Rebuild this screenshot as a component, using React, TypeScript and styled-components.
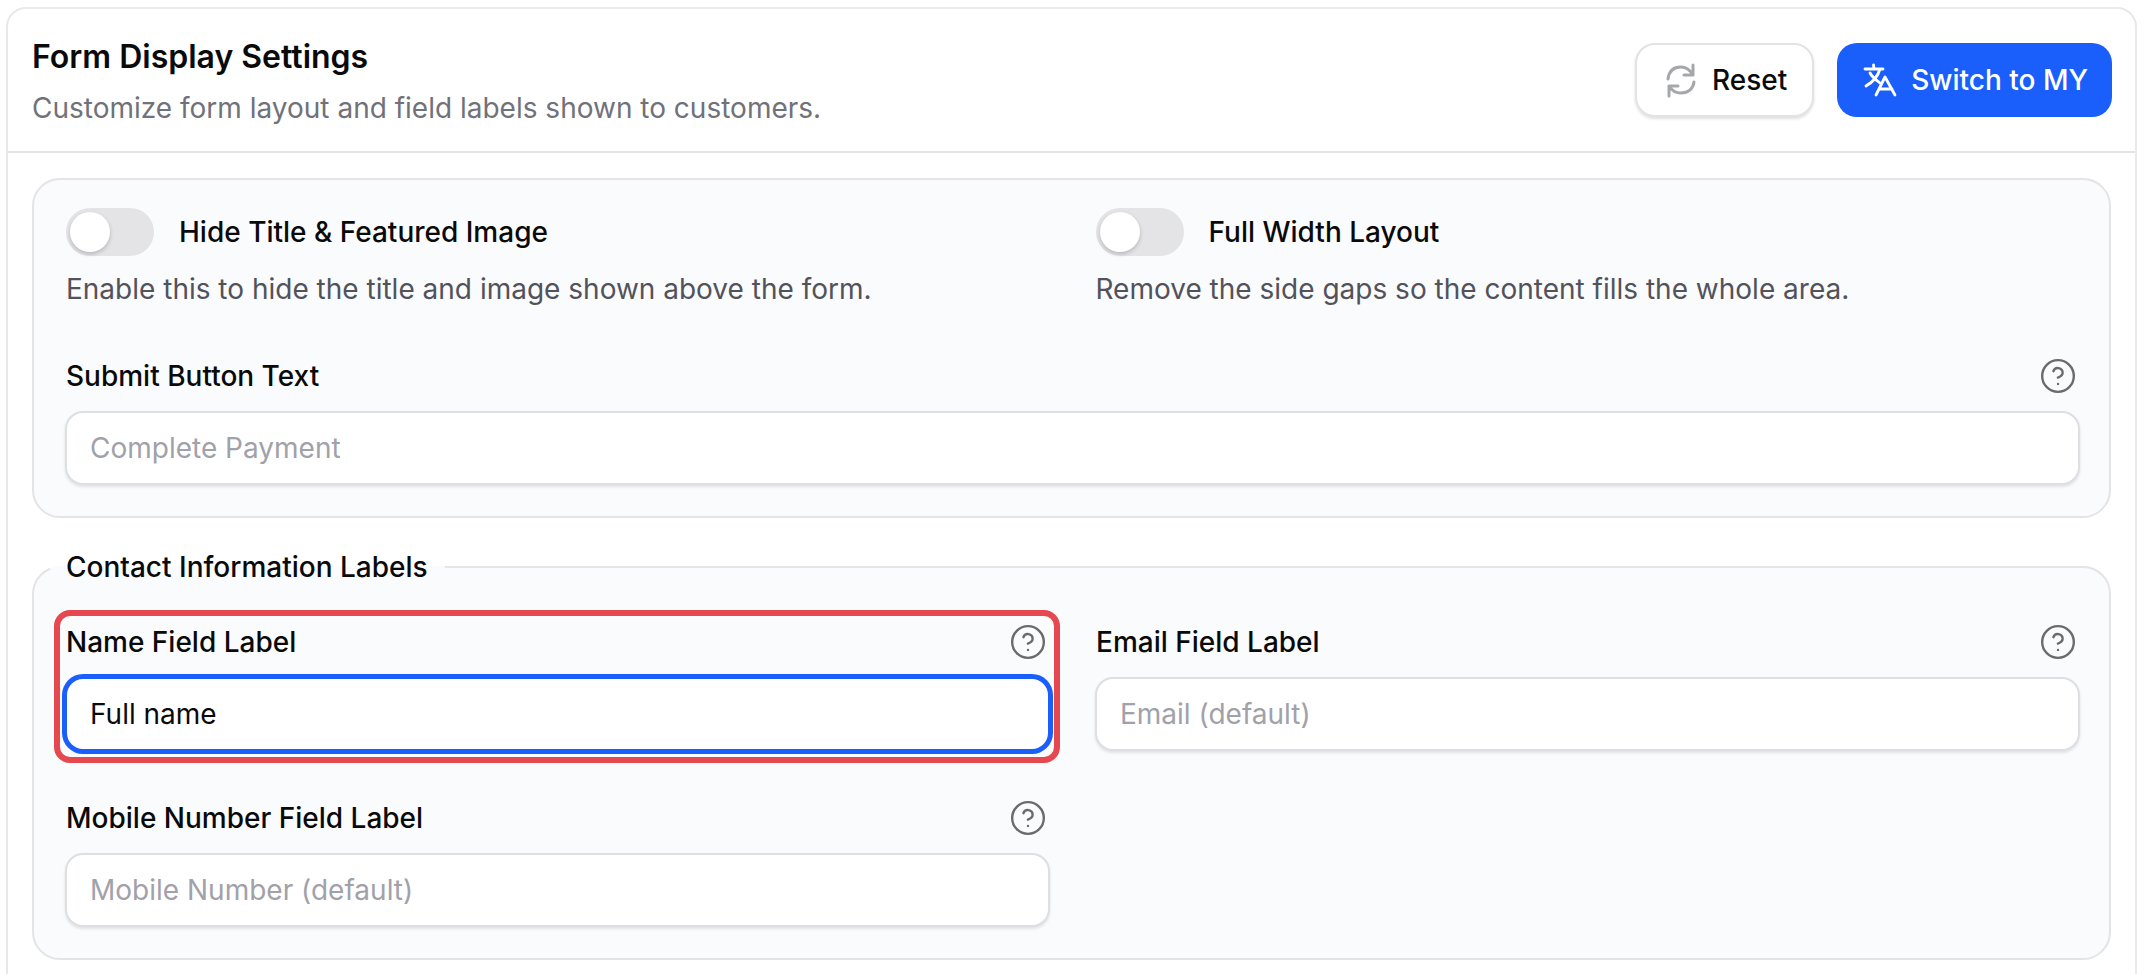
import React from 'react'
import styled, { createGlobalStyle } from 'styled-components'
import { CircleHelp } from 'lucide-react'

const GlobalStyle = createGlobalStyle`
  html, body {
    margin: 0;
    height: 974px;
    overflow: hidden;
    background: #fff;
    font-family: Inter, "Liberation Sans", sans-serif;
    color: #0a0a0a;
  }
  * { box-sizing: border-box; }
`

const Card = styled.div`
  width: 2131px;
  height: 1000px;
  margin: 7px 0 0 6px;
  border: 2px solid #e8e9eb;
  border-radius: 20px;
  background: #fff;
`

const Header = styled.header`
  height: 144px;
  padding: 0 23px 0 24px;
  display: flex;
  align-items: center;
  justify-content: space-between;
  border-bottom: 2px solid #e4e4e7;
`

const HeaderText = styled.div`
  padding-top: 4px;
`

const Title = styled.h1`
  margin: 0 0 14px;
  font-size: 32px;
  line-height: 38px;
  font-weight: 600;
`

const Subtitle = styled.p`
  margin: 0;
  font-size: 28px;
  line-height: 36px;
  color: #71717a;
`

const Actions = styled.div`
  display: flex;
  gap: 23px;
`

const Button = styled.button<{ $primary?: boolean }>`
  height: 74px;
  display: flex;
  align-items: center;
  gap: ${p => (p.$primary ? 13 : 15)}px;
  padding: ${p => (p.$primary ? '0 24px 0 26px' : '0 25px 0 28px')};
  border-radius: 20px;
  border: ${p => (p.$primary ? 'none' : '2px solid #e2e3e6')};
  background: ${p => (p.$primary ? '#1a5ffb' : '#fff')};
  color: ${p => (p.$primary ? '#fff' : '#0a0a0a')};
  box-shadow: ${p => (p.$primary ? 'none' : '0 2px 3px rgba(0, 0, 0, 0.12)')};
  font: 500 28px Inter, sans-serif;
`

const Body = styled.div`
  padding: 25px 24px 0;
`

const Panel = styled.section`
  padding: 28px 29px 31px 31px;
  border: 2px solid #e4e4e7;
  border-radius: 28px;
  background: #fafbfd;
`

const FieldsetPanel = styled.fieldset`
  margin: 31px 0 0;
  padding: 41px 29px 31px 31px;
  border: 2px solid #e4e4e7;
  border-radius: 28px;
  background: #fafbfd;
`

const Legend = styled.legend`
  margin-left: -15px;
  padding: 0 17px 0 16px;
  font-size: 28px;
  line-height: 36px;
  font-weight: 500;
`

const ToggleGrid = styled.div`
  display: grid;
  grid-template-columns: 1fr 1fr;
  column-gap: 45px;
  padding-left: 1px;
`

const ToggleRow = styled.div`
  display: flex;
  align-items: center;
  gap: 25px;
  font-size: 28px;
  font-weight: 500;
`

const Track = styled.span`
  width: 88px;
  height: 48px;
  padding: 4px;
  flex: none;
  border-radius: 24px;
  background: #e4e4e7;
`

const Knob = styled.span`
  display: block;
  width: 40px;
  height: 40px;
  border-radius: 50%;
  background: #fff;
  box-shadow: 0 2px 4px rgba(0, 0, 0, 0.2);
`

const Description = styled.p`
  margin: 15px 0 0;
  font-size: 28px;
  line-height: 36px;
  color: #52525b;
`

const Field = styled.div<{ $marked?: boolean }>`
  position: relative;
  &::after {
    content: '';
    display: ${p => (p.$marked ? 'block' : 'none')};
    position: absolute;
    inset: -16px -10px -12px -11px;
    border: 6px solid #e5484f;
    border-radius: 16px;
    pointer-events: none;
  }
`

const SubmitField = styled(Field)`
  margin-top: 53px;
`

const FieldHead = styled.div`
  height: 32px;
  margin-bottom: 19px;
  padding-left: 1px;
  display: flex;
  align-items: center;
  justify-content: space-between;
  font-size: 28px;
  font-weight: 500;
  svg {
    color: #6b6b6f;
    margin-right: 3px;
  }
`

const FieldGrid = styled.div`
  display: grid;
  grid-template-columns: 1fr 1fr;
  column-gap: 45px;
  row-gap: 51px;
`

const TextInput = styled.input<{ $focused?: boolean }>`
  display: block;
  width: 100%;
  height: 74px;
  padding: 0 23px;
  border: 2px solid ${p => (p.$focused ? '#1a5ffb' : '#dedfe3')};
  border-radius: 18px;
  outline: none;
  background: #fff;
  color: #0a0a0a;
  font: 400 28px Inter, sans-serif;
  box-shadow: ${p =>
    p.$focused ? '0 0 0 3px #1a5ffb' : '0 2px 3px rgba(0, 0, 0, 0.1)'};
  &::placeholder {
    color: #a1a1aa;
    opacity: 1;
  }
`

function ResetIcon() {
  return (
    <svg width="32" height="36" viewBox="9 7 32 36" fill="none" stroke="#a6a7aa" strokeWidth="3" strokeLinecap="round" strokeLinejoin="round">
      <path d="M12 24C13 16 18 12 25 12C30 12 34 15 37 20M37 10V20H28" />
      <path d="M38 27C37 34 32 38 25 38C20 38 16 36 13 31M13 41V31H22" />
    </svg>
  )
}

function TranslateIcon() {
  return (
    <svg width="35" height="34" viewBox="7 8 35 34" fill="none" stroke="#fff" strokeWidth="2.8" strokeLinecap="round" strokeLinejoin="round">
      <path d="M9 14H27M17.5 10L18 14M24 14C22 21 17 27 10 31M14 18C16 22 20 25 24 28" />
      <path d="M20 40L29 22L39 40M23 34H36" />
    </svg>
  )
}

type LabelledInputProps = {
  label: string
  placeholder?: string
  value?: string
  marked?: boolean
}

function LabelledInput({ label, placeholder, value, marked }: LabelledInputProps) {
  return (
    <Field $marked={marked}>
      <FieldHead>
        {label}
        <CircleHelp size={38} strokeWidth={1.5} />
      </FieldHead>
      <TextInput placeholder={placeholder} defaultValue={value} $focused={marked} />
    </Field>
  )
}

export default function App() {
  return (
    <>
      <GlobalStyle />
      <Card>
        <Header>
          <HeaderText>
            <Title>Form Display Settings</Title>
            <Subtitle>Customize form layout and field labels shown to customers.</Subtitle>
          </HeaderText>
          <Actions>
            <Button>
              <ResetIcon />
              Reset
            </Button>
            <Button $primary>
              <TranslateIcon />
              Switch to MY
            </Button>
          </Actions>
        </Header>
        <Body>
          <Panel>
            <ToggleGrid>
              <div>
                <ToggleRow>
                  <Track>
                    <Knob />
                  </Track>
                  Hide Title &amp; Featured Image
                </ToggleRow>
                <Description>Enable this to hide the title and image shown above the form.</Description>
              </div>
              <div>
                <ToggleRow>
                  <Track>
                    <Knob />
                  </Track>
                  Full Width Layout
                </ToggleRow>
                <Description>Remove the side gaps so the content fills the whole area.</Description>
              </div>
            </ToggleGrid>
            <SubmitField>
              <FieldHead>
                Submit Button Text
                <CircleHelp size={38} strokeWidth={1.5} />
              </FieldHead>
              <TextInput placeholder="Complete Payment" />
            </SubmitField>
          </Panel>
          <FieldsetPanel>
            <Legend>Contact Information Labels</Legend>
            <FieldGrid>
              <LabelledInput label="Name Field Label" value="Full name" marked />
              <LabelledInput label="Email Field Label" placeholder="Email (default)" />
              <LabelledInput label="Mobile Number Field Label" placeholder="Mobile Number (default)" />
            </FieldGrid>
          </FieldsetPanel>
        </Body>
      </Card>
    </>
  )
}
